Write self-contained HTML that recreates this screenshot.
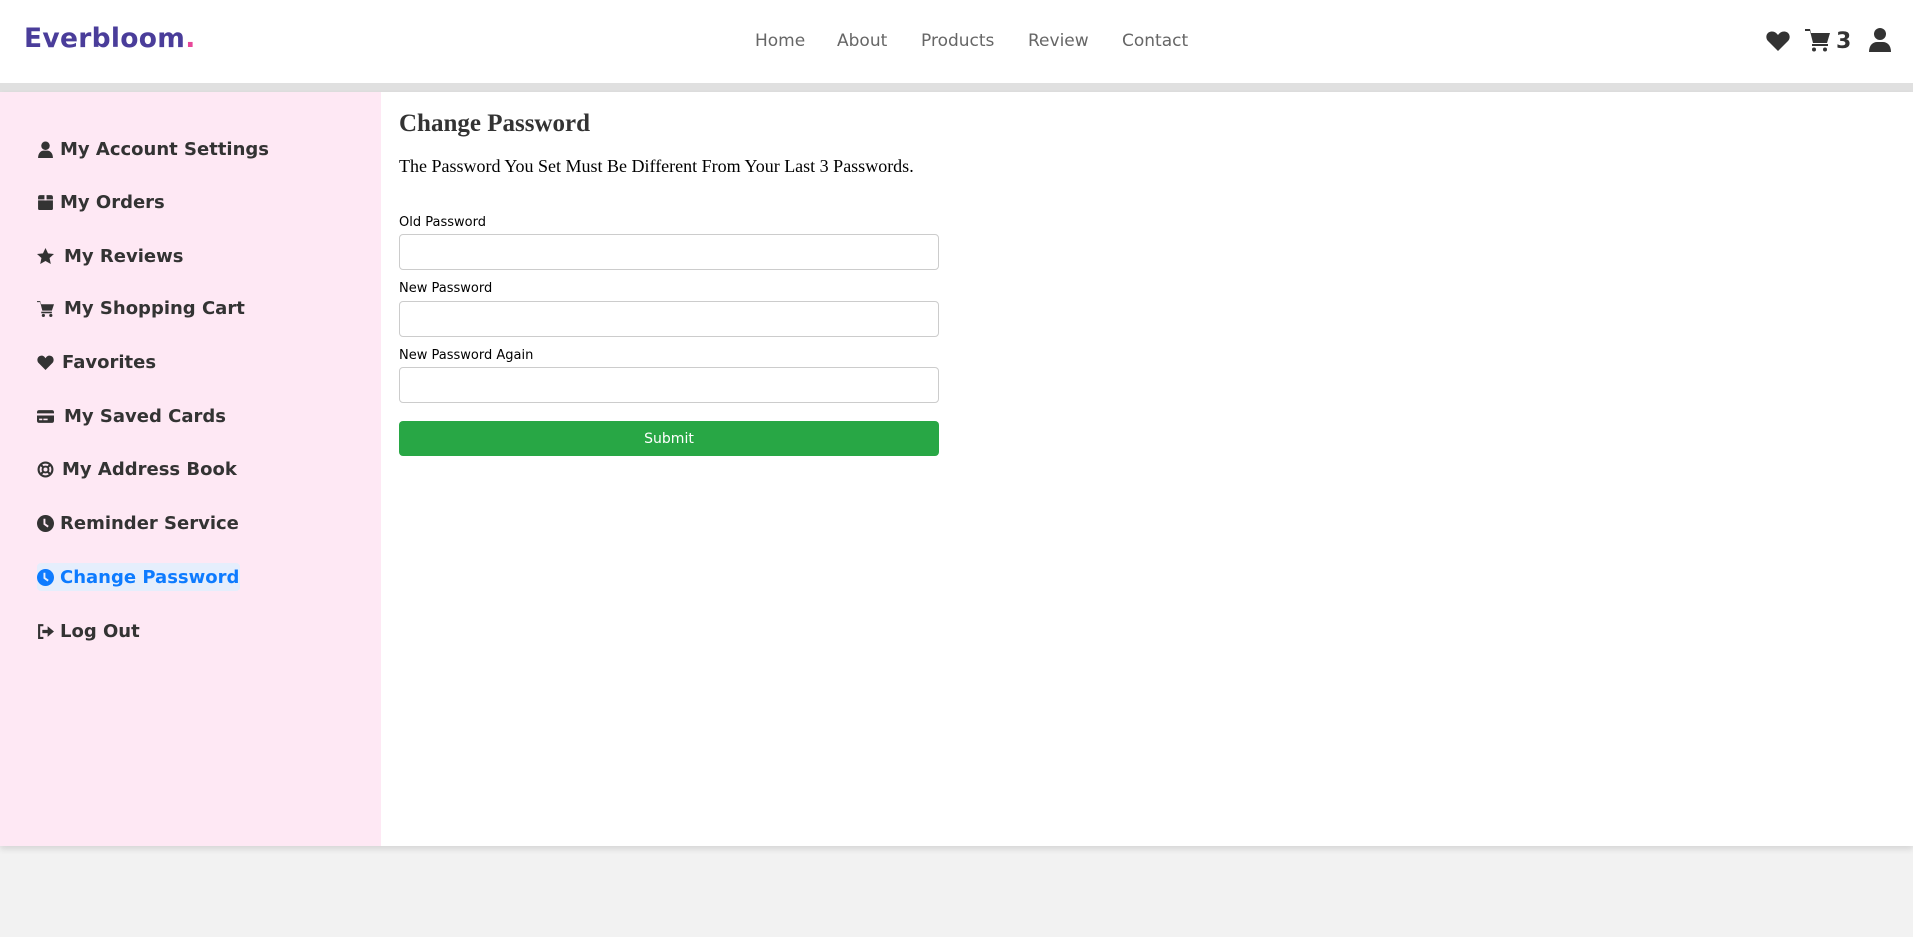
<!DOCTYPE html>
<html><head><meta charset="utf-8"><style>
*{margin:0;padding:0;box-sizing:border-box}
body{width:1913px;height:937px;background:#f2f2f2;font-family:"DejaVu Sans","Liberation Sans",sans-serif;overflow:hidden;position:relative}
.hdr{position:absolute;left:0;top:0;width:1913px;height:83px;background:#fff}
.band{position:absolute;left:0;top:83px;width:1913px;height:9px;background:#e0e0e0}
.logo{position:absolute;left:24px;top:23px;font-size:26.5px;font-weight:bold;color:#4a3d9a;letter-spacing:0.3px}
.logo span{color:#e8489a}
.nav a{position:absolute;top:31px;font-size:17px;color:#666;text-decoration:none}
.panel{position:absolute;left:0;top:92px;width:1913px;height:754px;background:#fff;box-shadow:0 3px 6px rgba(0,0,0,.12)}
.side{position:absolute;left:0;top:0;width:381px;height:754px;background:#fee8f4}
.item{position:absolute;left:37px;font-size:18px;font-weight:bold;color:#333;display:flex;align-items:center;height:28px;white-space:nowrap}
.item svg{width:17px;height:17px;margin-right:6px;fill:#333}
.item.act{color:#0d7bff;background:#e5eefc;border-radius:4px;padding-right:1px}
.item.act svg{fill:#0d7bff}
h1{position:absolute;left:399px;top:110px;font-family:"Liberation Serif",serif;font-size:25px;color:#333;font-weight:bold}
p.d{position:absolute;left:399px;top:156px;font-family:"Liberation Serif",serif;font-size:18px;color:#000}
label{position:absolute;left:399px;font-size:13px;color:#000}
.in{position:absolute;left:399px;width:540px;height:36px;border:1px solid #ccc;border-radius:4px;background:#fff}
.btn{position:absolute;left:399px;top:421px;width:540px;height:35px;background:#28a745;border-radius:4px;color:#fff;font-size:14px;text-align:center;line-height:36px}
</style></head><body>
<div class="hdr">
<div class="logo">Everbloom<span>.</span></div>
<div class="nav"><a style="left:755px">Home</a><a style="left:837px">About</a><a style="left:921px">Products</a><a style="left:1028px">Review</a><a style="left:1122px">Contact</a></div>
<svg style="position:absolute;left:1766px;top:30px" width="24" height="21" viewBox="0 0 24 21"><path d="M12 21L2 11C-1 8 0 2 5.5 1.5 8.5 1.3 10.5 3 12 5 13.5 3 15.5 1.3 18.5 1.5 24 2 25 8 22 11Z" fill="#333"/></svg>
<svg style="position:absolute;left:1805px;top:28px" width="26" height="24" viewBox="0 0 26 24"><path d="M0 1h5l1 4h19l-3 10H8L5 3H0z" fill="#333"/><rect x="7" y="16" width="16" height="2" fill="#333"/><circle cx="9" cy="21.5" r="2" fill="#333"/><circle cx="20" cy="21.5" r="2" fill="#333"/></svg>
<div style="position:absolute;left:1836px;top:29px;font-size:22px;font-weight:bold;color:#333">3</div>
<svg style="position:absolute;left:1869px;top:28px" width="22" height="24" viewBox="0 0 22 24"><circle cx="11" cy="6" r="6" fill="#333"/><path d="M0 24c0-7 4-10 8-10h6c4 0 8 3 8 10z" fill="#333"/></svg>
</div>
<div class="band"></div>
<div class="panel">
<div class="side">
<div class="item" style="top:43px"><svg viewBox="0 0 16 16"><circle cx="8" cy="4.5" r="4"/><path d="M1 16c0-5 3-7 5-7h4c2 0 5 2 5 7z"/></svg>My Account Settings</div>
<div class="item" style="top:96px"><svg viewBox="0 0 16 16"><path d="M1 3q0-2 2-2h10q2 0 2 2v2H1zM1 6h14v8q0 1-1 1H2q-1 0-1-1z"/><rect x="7" y="1" width="2" height="5" fill="#fee8f4"/></svg>My Orders</div>
<div class="item" style="top:150px"><svg viewBox="0 0 16 16" style="margin-right:10px"><path d="M8 0l2.4 5 5.6.6-4.2 3.8 1.2 5.6L8 12.2 3 15l1.2-5.6L0 5.6 5.6 5z"/></svg>My Reviews</div>
<div class="item" style="top:202px"><svg viewBox="0 0 16 16" style="margin-right:10px"><path d="M0 1h3l1 3h12l-2 6H5L3 2H0z"/><rect x="4" y="11" width="10" height="1.5"/><circle cx="6" cy="14.5" r="1.5"/><circle cx="13" cy="14.5" r="1.5"/></svg>My Shopping Cart</div>
<div class="item" style="top:256px"><svg viewBox="0 0 16 16" style="margin-right:8px"><path d="M8 15L1.5 8.5C-.5 6.5 0 2 4 1.5 6 1.3 7 2.5 8 4 9 2.5 10 1.3 12 1.5 16 2 16.5 6.5 14.5 8.5z"/></svg>Favorites</div>
<div class="item" style="top:310px"><svg viewBox="0 0 16 16" style="margin-right:10px"><path d="M0 4q0-2 2-2h12q2 0 2 2v1H0zM0 7h16v5q0 2-2 2H2q-2 0-2-2z"/><rect x="2" y="10" width="3" height="1.5" fill="#fee8f4"/><rect x="6" y="10" width="4" height="1.5" fill="#fee8f4"/></svg>My Saved Cards</div>
<div class="item" style="top:363px"><svg viewBox="0 0 16 16" style="margin-right:8px"><circle cx="8" cy="8" r="6.5" fill="none" stroke="#333" stroke-width="2"/><circle cx="8" cy="8" r="2.8" fill="none" stroke="#333" stroke-width="1.8"/><path d="M3 3l3 3M13 3l-3 3M3 13l3-3M13 13l-3-3" stroke="#333" stroke-width="2"/></svg>My Address Book</div>
<div class="item" style="top:417px"><svg viewBox="0 0 16 16"><circle cx="8" cy="8" r="8"/><path d="M7 3.5v5l3.5 2.5" stroke="#fee8f4" stroke-width="1.8" fill="none"/></svg>Reminder Service</div>
<div class="item act" style="top:471px"><svg viewBox="0 0 16 16"><circle cx="8" cy="8" r="8"/><path d="M7 3.5v5l3.5 2.5" stroke="#e5eefc" stroke-width="1.8" fill="none"/></svg>Change Password</div>
<div class="item" style="top:525px"><svg viewBox="0 0 16 16"><path d="M6 2H2v12h4" fill="none" stroke="#333" stroke-width="2"/><path d="M5 6.5h5V3l6 5-6 5V9.5H5z"/></svg>Log Out</div>
</div>
</div>
<h1>Change Password</h1>
<p class="d">The Password You Set Must Be Different From Your Last 3 Passwords.</p>
<label style="top:215px">Old Password</label><div class="in" style="top:234px"></div>
<label style="top:281px">New Password</label><div class="in" style="top:301px"></div>
<label style="top:348px">New Password Again</label><div class="in" style="top:367px"></div>
<div class="btn">Submit</div>
</body></html>
